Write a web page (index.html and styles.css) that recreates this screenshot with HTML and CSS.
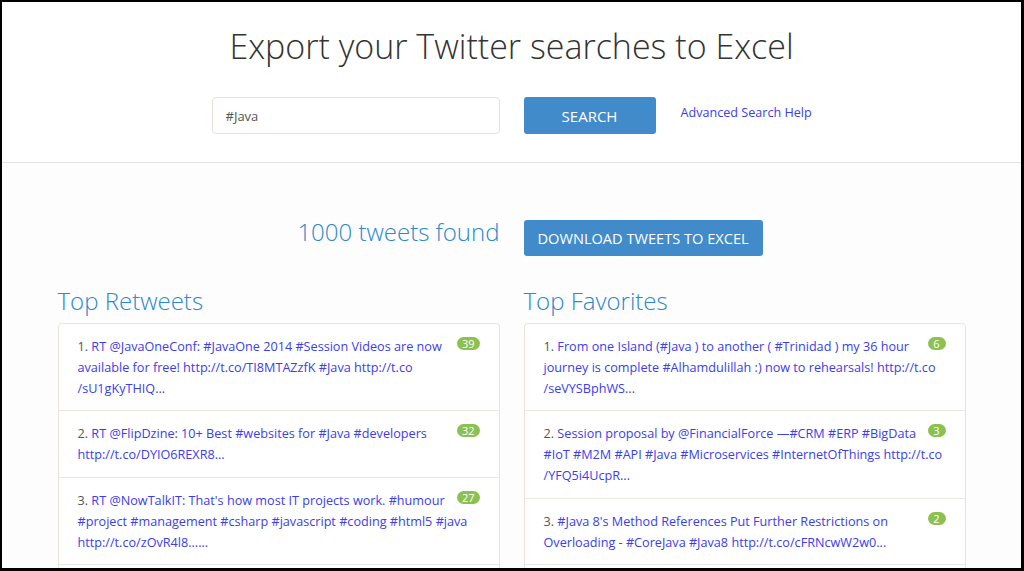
FILE: index.html
```html
<!DOCTYPE html>
<html lang="en">
<head>
<meta charset="utf-8">
<title>Export your Twitter searches to Excel</title>
<link rel="stylesheet" href="styles.css">
</head>
<body>
<div class="frame">
  <header class="top">
    <h1 class="title">Export your Twitter searches to Excel</h1>
    <div class="row">
      <div class="col col-end">
        <input class="search-input" type="text" value="#Java">
      </div>
      <div class="col">
        <button class="btn btn-search">SEARCH</button>
        <a class="help-link" href="#">Advanced Search Help</a>
      </div>
    </div>
  </header>
  <main class="results">
    <div class="row found-row">
      <div class="col col-end">
        <h2 class="found">1000 tweets found</h2>
      </div>
      <div class="col">
        <button class="btn btn-download">DOWNLOAD TWEETS TO EXCEL</button>
      </div>
    </div>
    <div class="row lists">
      <section class="col col-stack">
        <h2 class="list-title">Top Retweets</h2>
        <ul class="list-group">
          <li class="item"><span class="badge">39</span><span class="num">1.</span> <a href="#">RT @JavaOneConf: #JavaOne 2014 #Session Videos are now<br>available for free! http://t.co/TI8MTAZzfK #Java http://t.co<br>/sU1gKyTHIQ...</a></li>
          <li class="item"><span class="badge">32</span><span class="num">2.</span> <a href="#">RT @FlipDzine: 10+ Best #websites for #Java #developers<br>http://t.co/DYIO6REXR8...</a></li>
          <li class="item"><span class="badge">27</span><span class="num">3.</span> <a href="#">RT @NowTalkIT: That's how most IT projects work. #humour<br>#project #management #csharp #javascript #coding #html5 #java<br>http://t.co/zOvR4l8......</a></li>
          <li class="item item-empty"></li>
        </ul>
      </section>
      <section class="col col-stack">
        <h2 class="list-title">Top Favorites</h2>
        <ul class="list-group">
          <li class="item"><span class="badge">6</span><span class="num">1.</span> <a href="#">From one Island (#Java ) to another ( #Trinidad ) my 36 hour<br>journey is complete #Alhamdulillah :) now to rehearsals! http://t.co<br>/seVYSBphWS...</a></li>
          <li class="item"><span class="badge">3</span><span class="num">2.</span> <a href="#">Session proposal by @FinancialForce —#CRM #ERP #BigData<br>#IoT #M2M #API #Java #Microservices #InternetOfThings http://t.co<br>/YFQ5i4UcpR...</a></li>
          <li class="item"><span class="badge">2</span><span class="num">3.</span> <a href="#">#Java 8's Method References Put Further Restrictions on<br>Overloading - #CoreJava #Java8 http://t.co/cFRNcwW2w0...</a></li>
          <li class="item item-empty"></li>
        </ul>
      </section>
    </div>
  </main>
</div>
</body>
</html>
```

FILE: styles.css
```css
* {
  box-sizing: border-box;
}

html, body {
  margin: 0;
  padding: 0;
  background: #000;
}

body {
  font-family: "Open Sans", "Liberation Sans", Arial, sans-serif;
  color: #555;
}

.frame {
  width: 1024px;
  height: 571px;
  border-style: solid;
  border-color: #000;
  border-width: 2px 3px 3px 2px;
  background: #fdfdfd;
  overflow: hidden;
  display: flex;
  flex-direction: column;
}

.top {
  background: #fff;
  padding: 24px 0 28px;
  border-bottom: 1px solid #e2e2e2;
}

.title {
  margin: 0;
  font-size: 34px;
  line-height: 40px;
  font-weight: 300;
  color: #333;
  text-align: center;
}

.row {
  width: 908px;
  margin: 0 auto;
  display: grid;
  grid-template-columns: 1fr 1fr;
  column-gap: 24px;
}

.top .row {
  margin-top: 31px;
}

.col {
  display: flex;
  align-items: flex-start;
}

.col-end {
  justify-content: flex-end;
}

.col-stack {
  flex-direction: column;
  align-items: stretch;
}

.search-input {
  width: 288px;
  height: 37px;
  border: 1px solid #e8e1d8;
  border-radius: 4px;
  background: #fff;
  padding: 0 13px;
  font-family: inherit;
  font-size: 13px;
  color: #555;
  outline: none;
}

.btn {
  border: none;
  border-radius: 3px;
  background: #428bca;
  color: #fff;
  font-family: inherit;
  font-weight: 400;
  cursor: pointer;
}

.btn-search {
  width: 132px;
  height: 37px;
  font-size: 15px;
}

.help-link {
  margin: 6px 0 0 25px;
  font-size: 12.6px;
  line-height: 20px;
  color: #3c3cf0;
  text-decoration: none;
}

.found-row {
  margin-top: 54px;
}

.found {
  margin: 0;
  font-size: 24px;
  line-height: 30px;
  font-weight: 300;
  color: #2b88cc;
}

.btn-download {
  margin-top: 3px;
  height: 36px;
  padding: 0 14px;
  font-size: 14.6px;
}

.lists {
  margin-top: 30px;
}

.list-title {
  margin: 0 0 7px;
  font-size: 24px;
  line-height: 30px;
  font-weight: 300;
  color: #2b88cc;
}

.list-group {
  list-style: none;
  margin: 0;
  padding: 0;
  background: #fff;
  border: 1px solid #e8e3db;
  border-radius: 4px;
}

.item {
  padding: 12px 19px 12px;
  font-size: 12.65px;
  line-height: 20.8px;
  color: #555;
  white-space: nowrap;
  border-top: 1px solid #ece8e1;
}

.item:first-child {
  border-top: none;
}

.item-empty {
  height: 60px;
}

.item a {
  color: #3c3cf0;
  text-decoration: none;
}

.badge {
  float: right;
  min-width: 18px;
  margin-top: 1px;
  padding: 0 5px;
  border-radius: 7px;
  background: #8cc152;
  color: #fff;
  font-size: 11px;
  line-height: 13px;
  text-align: center;
}
```
